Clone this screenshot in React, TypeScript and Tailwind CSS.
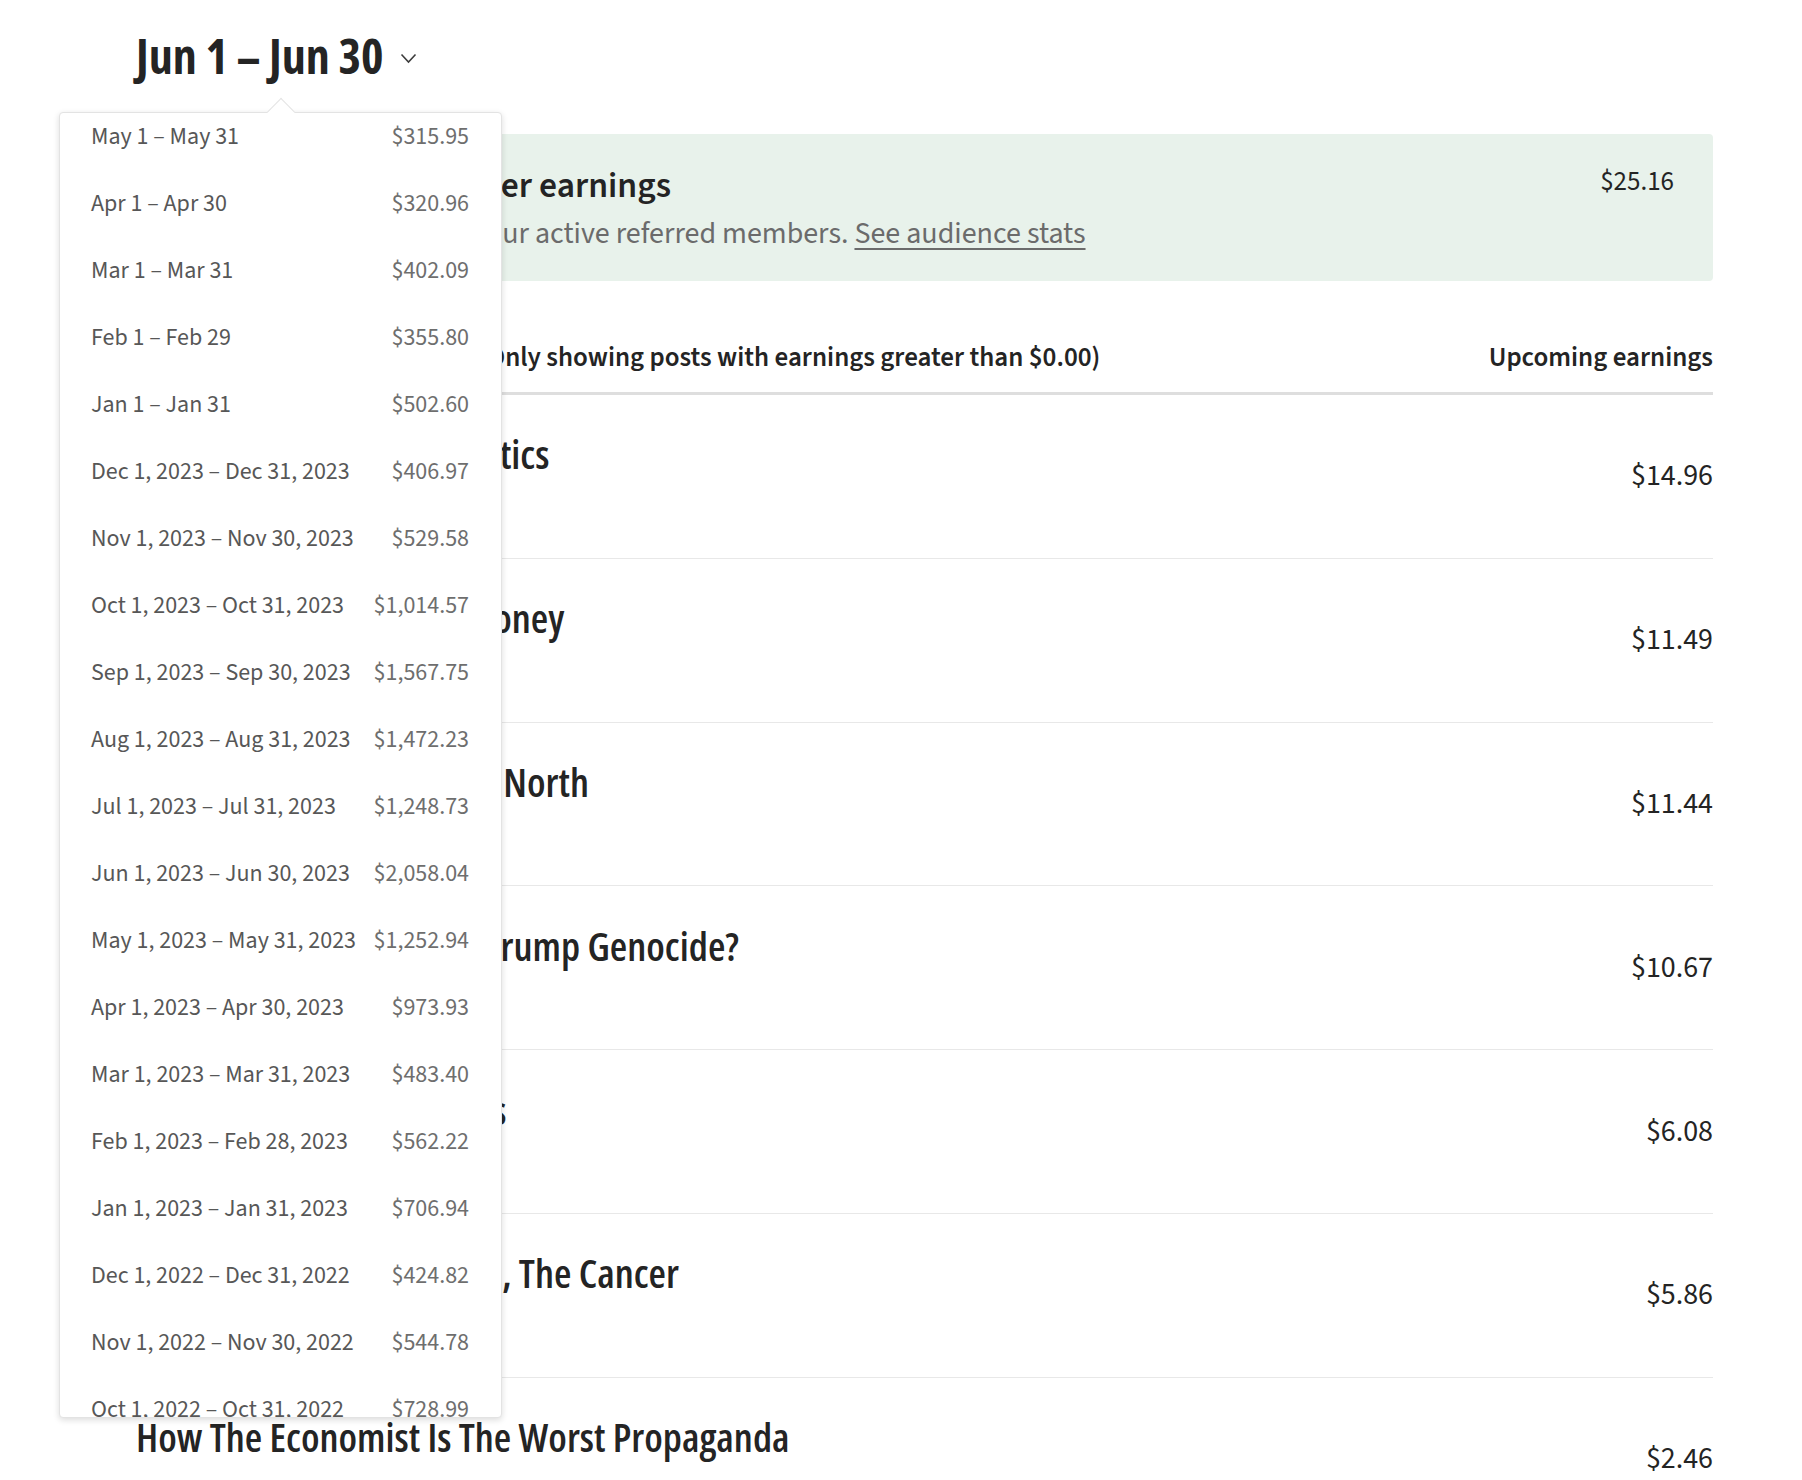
import React from 'react';

const periods: [string, string][] = [
  ['May 1 – May 31', '$315.95'],
  ['Apr 1 – Apr 30', '$320.96'],
  ['Mar 1 – Mar 31', '$402.09'],
  ['Feb 1 – Feb 29', '$355.80'],
  ['Jan 1 – Jan 31', '$502.60'],
  ['Dec 1, 2023 – Dec 31, 2023', '$406.97'],
  ['Nov 1, 2023 – Nov 30, 2023', '$529.58'],
  ['Oct 1, 2023 – Oct 31, 2023', '$1,014.57'],
  ['Sep 1, 2023 – Sep 30, 2023', '$1,567.75'],
  ['Aug 1, 2023 – Aug 31, 2023', '$1,472.23'],
  ['Jul 1, 2023 – Jul 31, 2023', '$1,248.73'],
  ['Jun 1, 2023 – Jun 30, 2023', '$2,058.04'],
  ['May 1, 2023 – May 31, 2023', '$1,252.94'],
  ['Apr 1, 2023 – Apr 30, 2023', '$973.93'],
  ['Mar 1, 2023 – Mar 31, 2023', '$483.40'],
  ['Feb 1, 2023 – Feb 28, 2023', '$562.22'],
  ['Jan 1, 2023 – Jan 31, 2023', '$706.94'],
  ['Dec 1, 2022 – Dec 31, 2022', '$424.82'],
  ['Nov 1, 2022 – Nov 30, 2022', '$544.78'],
  ['Oct 1, 2022 – Oct 31, 2022', '$728.99'],
];

const posts: { title: string; meta: string; amount: string }[] = [
  { title: 'The End Of American Politics', meta: 'Jun 3 · 6 min read', amount: '$14.96' },
  { title: 'Why Banks Want Your Money', meta: 'May 28 · 5 min read', amount: '$11.49' },
  { title: 'The Health Of The Global North', meta: 'Jun 9 · 7 min read', amount: '$11.44' },
  { title: 'Could Gaza Become the Trump Genocide?', meta: 'Jun 14 · 6 min read', amount: '$10.67' },
  { title: 'The Youth Of The Soldiers', meta: 'Jun 18 · 5 min read', amount: '$6.08' },
  { title: 'American Exceptionalism, The Cancer', meta: 'Jun 21 · 8 min read', amount: '$5.86' },
  { title: 'How The Economist Is The Worst Propaganda', meta: 'Jun 25 · 6 min read', amount: '$2.46' },
];

const Chevron = () => (
  <svg width="17" height="11" viewBox="0 0 17 11" fill="none" className="mt-[4px]">
    <path d="M1.5 1.5 L8.5 9 L15.5 1.5" stroke="#3d3d3d" strokeWidth="1.6" />
  </svg>
);

const PeriodMenu = () => (
  <div className="absolute left-[59px] top-[112px] w-[443px] h-[1306px]">
    {/* notch pointing at the period title */}
    <div className="absolute left-[212px] -top-[10px] w-[20px] h-[20px] rotate-45 bg-white border-t border-l border-[#e3e3e3] z-10" />
    <div className="h-full bg-white border border-[#e3e3e3] rounded-[4px] shadow-[0_2px_6px_rgba(0,0,0,0.14)] overflow-hidden">
      <div className="-mt-[10px]">
        {periods.map(([range, amount]) => (
          <div
            key={range}
            className="h-[67px] flex items-center justify-between pl-[31px] pr-[32px] text-[24px] leading-[32px]"
          >
            <span className="text-[#575757]">{range}</span>
            <span className="text-[#6e6e6e]">{amount}</span>
          </div>
        ))}
      </div>
    </div>
  </div>
);

export default function App() {
  return (
    <div className="relative h-[1480px] overflow-hidden bg-white font-['Source_Sans_3','Open_Sans',sans-serif] text-[#242424]">
      <div className="pl-[136px] pr-[89px]">
        <div className="pt-[26px] flex items-center gap-[16px]">
          <h1 className="text-[48px] leading-[60px] font-bold font-['Open_Sans',sans-serif] font-stretch-condensed">
            Jun 1 – Jun 30
          </h1>
          <Chevron />
        </div>

        <div className="mt-[48px] bg-[#e8f2eb] rounded-[4px] pl-[24px] pr-[39px] pt-[30px] pb-[29px] flex justify-between">
          <div>
            <div className="text-[35.5px] leading-[44px] font-semibold">Recent referred member earnings</div>
            <div className="mt-[8px] text-[30px] leading-[36px] text-[#6b6b6b]">
              Estimated earnings from your active referred members.{' '}
              <span className="underline underline-offset-[5px] decoration-[2px]">See audience stats</span>
            </div>
          </div>
          <div className="text-[27px] leading-[36px]">$25.16</div>
        </div>

        <div className="mt-[59px] pb-[16px] border-b-[3px] border-[#dedede] flex justify-between text-[27px] leading-[36px] font-semibold">
          <span>Story earnings for this period (Only showing posts with earnings greater than $0.00)</span>
          <span>Upcoming earnings</span>
        </div>

        {posts.map((p) => (
          <div key={p.title} className="h-[163.8px] border-b border-[#e8e8e8] flex items-center justify-between">
            <div>
              <div className="text-[40px] leading-[52px] font-semibold font-['Open_Sans',sans-serif] font-stretch-condensed">
                {p.title}
              </div>
              <div className="mt-[12px] text-[24px] leading-[32px] text-[#6b6b6b]">{p.meta}</div>
            </div>
            <div className="text-[30px] leading-[40px]">{p.amount}</div>
          </div>
        ))}
      </div>

      <PeriodMenu />
    </div>
  );
}
